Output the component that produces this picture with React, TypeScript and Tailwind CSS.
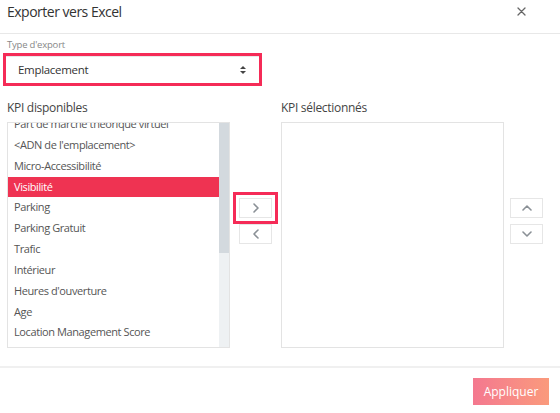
import React from "react";

const items = [
  "Part de marché théorique virtuel",
  "<ADN de l'emplacement>",
  "Micro-Accessibilité",
  "Visibilité",
  "Parking",
  "Parking Gratuit",
  "Trafic",
  "Intérieur",
  "Heures d'ouverture",
  "Age",
  "Location Management Score",
];

function Chevron({ dir }: { dir: "left" | "right" | "up" | "down" }) {
  const d =
    dir === "right"
      ? "M3 1 L7 5 L3 9"
      : dir === "left"
      ? "M7 1 L3 5 L7 9"
      : dir === "up"
      ? "M1 7 L5 3 L9 7"
      : "M1 3 L5 7 L9 3";
  return (
    <svg width="10" height="10" viewBox="0 0 10 10" fill="none">
      <path d={d} stroke="#8a9096" strokeWidth="1.6" strokeLinecap="round" strokeLinejoin="round" />
    </svg>
  );
}

function SmallBtn({ dir }: { dir: "left" | "right" | "up" | "down" }) {
  return (
    <div className="w-[33px] h-[20px] border border-[#e6e6e6] bg-white flex items-center justify-center">
      <Chevron dir={dir} />
    </div>
  );
}

export default function App() {
  return (
    <div
      className="w-[560px] h-[413px] bg-white text-[#444] overflow-hidden"
      style={{ fontFamily: '"Open Sans", "Liberation Sans", sans-serif' }}
    >
      {/* Header */}
      <div className="h-[34px] flex items-center justify-between pl-[7px] pr-[34px] border-b border-[#e8e8e8]">
        <div className="text-[14px] tracking-[-0.5px] text-[#333] leading-none -mt-[10px]">Exporter vers Excel</div>
        <svg width="9" height="9" viewBox="0 0 9 9" className="-mt-[10px]">
          <path d="M1 1 L8 8 M8 1 L1 8" stroke="#666" strokeWidth="1.3" strokeLinecap="round" />
        </svg>
      </div>

      {/* Type d'export */}
      <div className="pl-[7px] pt-[5px] text-[9.5px] tracking-[-0.2px] leading-[12px] text-[#888]">Type d'export</div>
      <div className="ml-[3px] mt-[2px] w-[259px] h-[33px] border-[3px] border-[#f52b57] bg-white">
        <div className="h-full border-t border-[#e8e8e8] flex items-center justify-between pl-[12px] pr-[13px]">
          <span className="text-[11.5px] tracking-[-0.3px] text-[#333]">Emplacement</span>
          <svg width="6" height="10" viewBox="0 0 6 10">
            <path d="M0 4 L3 1 L6 4 Z" fill="#444" />
            <path d="M0 6 L3 9 L6 6 Z" fill="#444" />
          </svg>
        </div>
      </div>

      {/* Columns */}
      <div className="flex mt-[14px] pl-[7px]">
        {/* left */}
        <div className="w-[223px]">
          <div className="text-[12px] tracking-[-0.3px] text-[#444] leading-[16px] h-[22px]">KPI disponibles</div>
          <div className="h-[226px] border border-[#e3e3e3] flex overflow-hidden">
            <div className="flex-1 overflow-hidden">
              <div className="-mt-[9px]">
                {items.map((it) => {
                  const sel = it === "Visibilité";
                  return (
                    <div
                      key={it}
                      className={
                        "h-[20.85px] leading-[20.85px] text-[11px] tracking-[-0.4px] pl-[6px] whitespace-nowrap " +
                        (sel ? "bg-[#ef3352] text-white" : "text-[#555]")
                      }
                    >
                      {it}
                    </div>
                  );
                })}
              </div>
            </div>
            <div className="w-[10px] bg-[#eef1f3] flex flex-col">
              <div className="h-[130px] bg-[#d3d9de]" />
            </div>
          </div>
        </div>

        {/* middle */}
        <div className="w-[51px] pt-[92px] pl-[3px]">
          <div className="w-[45px] border-[3px] border-[#f52b57] p-[3px] bg-white">
            <SmallBtn dir="right" />
          </div>
          <div className="pl-[6px]">
            <SmallBtn dir="left" />
          </div>
        </div>

        {/* right */}
        <div className="w-[223px]">
          <div className="text-[12px] tracking-[-0.3px] text-[#444] leading-[16px] h-[22px]">KPI sélectionnés</div>
          <div className="h-[226px] border border-[#e3e3e3]" />
        </div>

        <div className="pl-[6px] pt-[98px] flex flex-col gap-[6px]">
          <SmallBtn dir="up" />
          <SmallBtn dir="down" />
        </div>
      </div>

      {/* Footer */}
      <div className="mt-[18px] border-t-2 border-[#f0f0f0] flex justify-end pr-[11px] pt-[10px]">
        <div className="w-[76px] h-[27px] bg-gradient-to-r from-[#f4788f] to-[#fa9a7c] text-white text-[12px] flex items-center justify-center">
          Appliquer
        </div>
      </div>
    </div>
  );
}
